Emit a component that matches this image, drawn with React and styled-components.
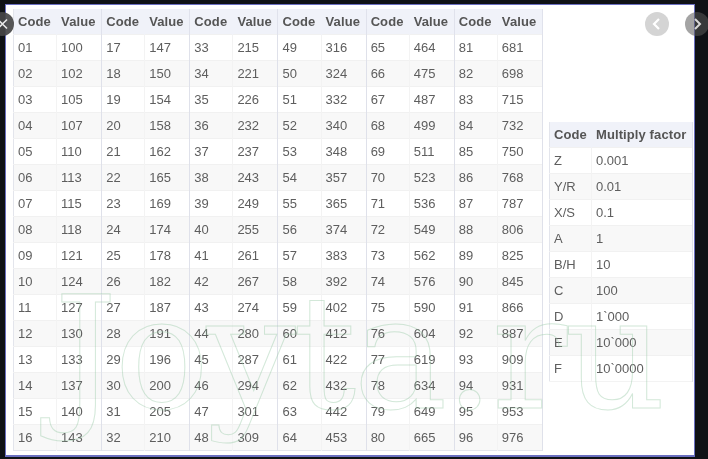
import styled, { createGlobalStyle } from 'styled-components';

const GlobalStyle = createGlobalStyle`
  html, body {
    margin: 0;
    padding: 0;
    background: #0f1216;
  }
`;

const codes = [100, 102, 105, 107, 110, 113, 115, 118, 121, 124, 127, 130, 133, 137, 140, 143,
  147, 150, 154, 158, 162, 165, 169, 174, 178, 182, 187, 191, 196, 200, 205, 210,
  215, 221, 226, 232, 237, 243, 249, 255, 261, 267, 274, 280, 287, 294, 301, 309,
  316, 324, 332, 340, 348, 357, 365, 374, 383, 392, 402, 412, 422, 432, 442, 453,
  464, 475, 487, 499, 511, 523, 536, 549, 562, 576, 590, 604, 619, 634, 649, 665,
  681, 698, 715, 732, 750, 768, 787, 806, 825, 845, 866, 887, 909, 931, 953, 976];

const factors = [
  ['Z', '0.001'], ['Y/R', '0.01'], ['X/S', '0.1'], ['A', '1'], ['B/H', '10'],
  ['C', '100'], ['D', "1`000"], ['E', "10`000"], ['F', "10`0000"],
];

const Page = styled.div`
  position: relative;
  width: 708px;
  height: 459px;
  padding: 4px 13px 2px 5px;
  box-sizing: border-box;
  overflow: hidden;
  background: #0f1216;
`;

const Sheet = styled.div`
  position: relative;
  display: flex;
  align-items: flex-start;
  gap: 6px;
  height: 100%;
  box-sizing: border-box;
  padding: 4px 0 0 7px;
  background: #fff;
  border: 1px solid #6a6fc0;
  border-bottom-width: 2px;
  font-family: "Liberation Sans", Arial, sans-serif;
  font-size: 13px;
  color: #5e5e5e;
  filter: blur(0.5px);
`;

const Table = styled.table`
  border-collapse: collapse;
  table-layout: fixed;
  width: ${(p) => p.$width}px;
  margin-top: ${(p) => p.$top || 0}px;
  border-left: 1px solid #e3e5ec;
  border-right: 1px solid #e8e9f0;
  border-bottom: 1px solid ${(p) => (p.$open ? '#f3f3f3' : '#e3e5ec')};
`;

const Head = styled.th`
  height: 25px;
  padding: 0 0 0 4px;
  text-align: left;
  font-weight: 700;
  color: #555;
  letter-spacing: 0.1px;
  background: #f0f2f9;
  white-space: nowrap;
  border-right: 1px solid ${(p) => (p.$value ? '#e0e2ec' : '#f0f2f9')};
`;

const Row = styled.tr`
  background: ${(p) => (p.$even ? '#f8f8f8' : '#fff')};
`;

const Cell = styled.td`
  height: 26px;
  box-sizing: border-box;
  padding: 0 0 0 4px;
  border-top: 1px solid #f1f1f1;
  border-right: 1px solid ${(p) => (p.$value ? '#dfe1ea' : '#f3f3f3')};
  white-space: nowrap;
`;

const Watermark = styled.div`
  position: absolute;
  left: 48px;
  top: 254px;
  font-family: "DejaVu Serif", serif;
  font-size: 158px;
  letter-spacing: -3px;
  line-height: 1.2;
  white-space: nowrap;
  color: transparent;
  -webkit-text-stroke: 1px rgba(150, 200, 165, 0.42);
  pointer-events: none;
`;

const Round = styled.div`
  position: absolute;
  left: ${(p) => p.$x - 12}px;
  top: 12px;
  width: 24px;
  height: 24px;
  display: flex;
  align-items: center;
  justify-content: center;
  border-radius: 50%;
  background: ${(p) => p.$bg};
  filter: blur(0.4px);
`;

const Glyph = styled.svg`
  width: 24px;
  height: 24px;
  flex-shrink: 0;
  overflow: visible;
`;

const groups = [0, 1, 2, 3, 4, 5];
const rows = Array.from({ length: 16 }, (_, i) => i);
const pad = (n) => String(n).padStart(2, '0');

export default function App() {
  return (
    <Page>
      <GlobalStyle />
      <Sheet>
        <Table $width={530}>
          <colgroup>
            {groups.map((g) => [<col key={`c${g}`} width="43" />, <col key={`v${g}`} width="45" />])}
          </colgroup>
          <thead>
            <tr>
              {groups.map((g) => [
                <Head key={`c${g}`}>Code</Head>,
                <Head key={`v${g}`} $value>Value</Head>,
              ])}
            </tr>
          </thead>
          <tbody>
            {rows.map((r) => (
              <Row key={r} $even={r % 2 === 1}>
                {groups.map((g) => [
                  <Cell key={`c${g}`}>{pad(g * 16 + r + 1)}</Cell>,
                  <Cell key={`v${g}`} $value>{codes[g * 16 + r]}</Cell>,
                ])}
              </Row>
            ))}
          </tbody>
        </Table>
        <Table $width={143} $top={113} $open>
          <colgroup>
            <col width="42" />
            <col width="101" />
          </colgroup>
          <thead>
            <tr>
              <Head>Code</Head>
              <Head $value>Multiply factor</Head>
            </tr>
          </thead>
          <tbody>
            {factors.map(([code, factor], i) => (
              <Row key={code} $even={i % 2 === 1}>
                <Cell>{code}</Cell>
                <Cell $value>{factor}</Cell>
              </Row>
            ))}
          </tbody>
        </Table>
        <Watermark>Joyta.ru</Watermark>
      </Sheet>
      <Round $x={2} $bg="rgba(70,70,72,0.92)">
        <Glyph viewBox="0 0 24 24">
          <path d="M8 7.500 L17 16.500 M17 7.500 L8 16.500" stroke="#e8e8e8" strokeWidth="1.600" fill="none" />
        </Glyph>
      </Round>
      <Round $x={657} $bg="#d4d4d4">
        <Glyph viewBox="0 0 24 24">
          <path d="M14 7 L9 12 L14 17" stroke="#fff" strokeWidth="2.200" fill="none" />
        </Glyph>
      </Round>
      <Round $x={697} $bg="rgba(90,90,90,0.55)">
        <Glyph viewBox="0 0 24 24">
          <path d="M10 7 L15 12 L10 17" stroke="#d8d8d8" strokeWidth="2" fill="none" />
        </Glyph>
      </Round>
    </Page>
  );
}
